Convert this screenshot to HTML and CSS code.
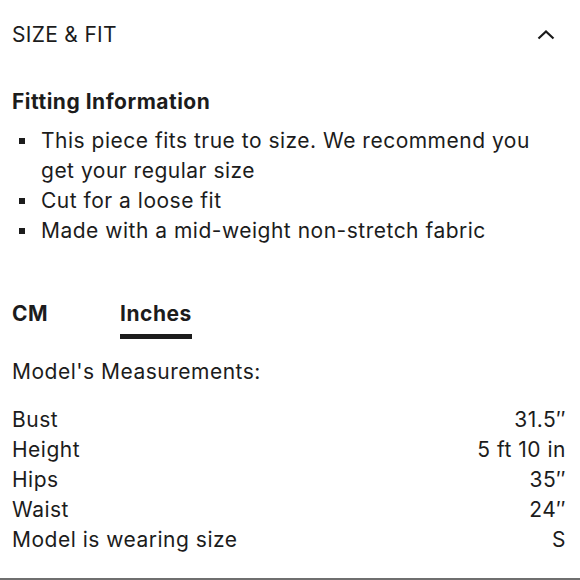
FILE: index.html
```html
<!DOCTYPE html>
<html>
<head>
<meta charset="utf-8">
<link rel="stylesheet" href="styles.css">
</head>
<body>
<section class="panel">
  <header class="head">
    <h2 class="head-title">SIZE &amp; FIT</h2>
    <svg class="chev" width="18" height="10" viewBox="0 0 18 10"><polyline points="1.5,8.5 9,1.5 16.5,8.5" fill="none" stroke="#1a1a1a" stroke-width="2.2"/></svg>
  </header>
  <h3 class="fit-title">Fitting Information</h3>
  <ul class="bullets">
    <li class="bullet"><span class="mark"></span><span class="btext">This piece fits true to size. We recommend you get your regular size</span></li>
    <li class="bullet"><span class="mark"></span><span class="btext">Cut for a loose fit</span></li>
    <li class="bullet"><span class="mark"></span><span class="btext">Made with a mid-weight non-stretch fabric</span></li>
  </ul>
  <div class="tabs">
    <div class="tab">CM</div>
    <div class="tab active">Inches</div>
  </div>
  <p class="model">Model's Measurements:</p>
  <div class="rows">
    <div class="row"><span>Bust</span><span>31.5″</span></div>
    <div class="row"><span>Height</span><span>5 ft 10 in</span></div>
    <div class="row"><span>Hips</span><span>35″</span></div>
    <div class="row"><span>Waist</span><span>24″</span></div>
    <div class="row"><span>Model is wearing size</span><span>S</span></div>
  </div>
</section>
</body>
</html>
```
FILE: styles.css
```css
html, body {
  margin: 0;
  padding: 0;
  background: #fff;
}
body {
  font-family: Inter, "Liberation Sans", sans-serif;
  color: #1c1c1c;
  font-size: 21px;
  letter-spacing: 0.5px;
  line-height: 30px;
}
.panel {
  height: 558px;
  border-bottom: 2px solid #6f6f6f;
  padding: 20px 14px 0 12px;
  width: 554px;
}
.head {
  display: flex;
  align-items: center;
  justify-content: space-between;
}
.head-title {
  margin: 0;
  font-size: 21px;
  font-weight: 400;
  letter-spacing: 0.3px;
  line-height: 30px;
}
.chev {
  margin-right: 11px;
  display: block;
}
.fit-title {
  margin: 37px 0 0;
  font-size: 21px;
  font-weight: 700;
  letter-spacing: 0.5px;
  line-height: 30px;
}
.bullets {
  list-style: none;
  margin: 9px 0 0;
  padding: 0;
}
.bullet {
  display: flex;
  align-items: flex-start;
}
.mark {
  flex: none;
  width: 6px;
  height: 6px;
  background: #1c1c1c;
  margin: 12px 16px 0 7px;
}
.btext {
  flex: 1;
  padding-right: 20px;
}
.tabs {
  display: flex;
  gap: 72px;
  margin-top: 53px;
}
.tab {
  font-weight: 700;
  padding-bottom: 5px;
  border-bottom: 5px solid transparent;
}
.tab.active {
  border-bottom-color: #1c1c1c;
}
.model {
  margin: 18px 0 0;
}
.rows {
  margin-top: 18px;
}
.row {
  display: flex;
  justify-content: space-between;
}
```
